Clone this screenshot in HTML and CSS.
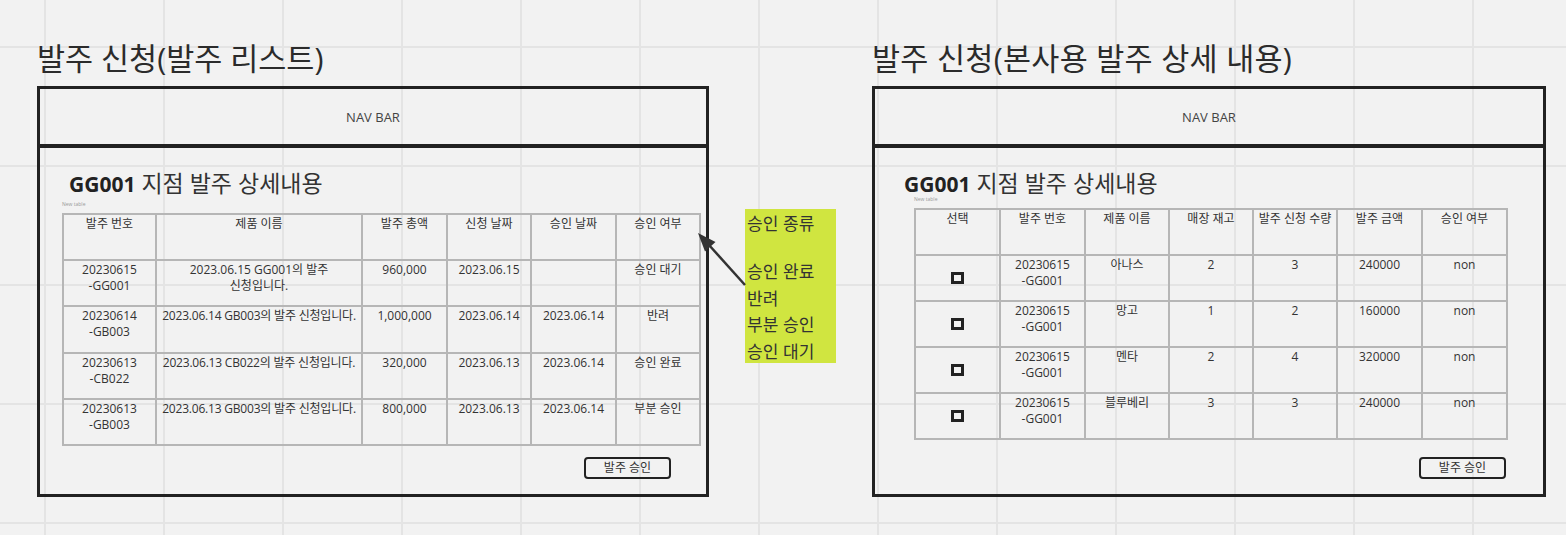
FILE: index.html
```html
<!DOCTYPE html>
<html lang="ko">
<head>
  <meta charset="UTF-8" />
  <meta name="viewport" content="width=device-width, initial-scale=1" />
  <title>발주 신청</title>
  <link rel="stylesheet" href="styles.css">
</head>
<body>

  <div class="canvas">

    <!-- 발주 리스트 -->
    <div class="board">
      <h1 class="board-title">발주 신청(발주 리스트)</h1>
      <div class="frame">
        <div class="nav">NAV BAR</div>
        <h2 class="heading"><b>GG001</b> 지점 발주 상세내용</h2>
        <div class="sheet sheet-list">
          <div class="caption">New table</div>
          <table class="grid list">
            <colgroup>
              <col style="width:93px"><col style="width:206px"><col style="width:85px">
              <col style="width:84px"><col style="width:85px"><col style="width:84px">
            </colgroup>
            <tr><td>발주 번호</td><td>제품 이름</td><td>발주 총액</td><td>신청 날짜</td><td>승인 날짜</td><td>승인 여부</td></tr>
            <tr><td>20230615<br>-GG001</td><td>2023.06.15 GG001의 발주<br>신청입니다.</td><td>960,000</td><td>2023.06.15</td><td></td><td>승인 대기</td></tr>
            <tr><td>20230614<br>-GB003</td><td class="long">2023.06.14 GB003의 발주 신청입니다.</td><td>1,000,000</td><td>2023.06.14</td><td>2023.06.14</td><td>반려</td></tr>
            <tr><td>20230613<br>-CB022</td><td class="long">2023.06.13 CB022의 발주 신청입니다.</td><td>320,000</td><td>2023.06.13</td><td>2023.06.14</td><td>승인 완료</td></tr>
            <tr><td>20230613<br>-GB003</td><td class="long">2023.06.13 GB003의 발주 신청입니다.</td><td>800,000</td><td>2023.06.13</td><td>2023.06.14</td><td>부분 승인</td></tr>
          </table>
          <div class="actions">
            <button class="approve-btn">발주 승인</button>
          </div>
        </div>
      </div>
    </div>

    <!-- 승인 종류 메모 -->
    <div class="side">
      <svg class="arrow" width="53" height="61" viewBox="0 0 53 61">
        <line x1="50" y1="56" x2="14" y2="16" stroke="#333" stroke-width="2.5" />
        <polygon points="3,4 20.5,13 10,22.5" fill="#333" />
      </svg>
      <div class="note">
        <div class="note-title">승인 종류</div>
        <div class="note-list">
          승인 완료<br>
          반려<br>
          부분 승인<br>
          승인 대기
        </div>
      </div>
    </div>

    <!-- 본사용 발주 상세 -->
    <div class="board board-wide">
      <h1 class="board-title">발주 신청(본사용 발주 상세 내용)</h1>
      <div class="frame">
        <div class="nav">NAV BAR</div>
        <h2 class="heading"><b>GG001</b> 지점 발주 상세내용</h2>
        <div class="sheet sheet-detail">
          <div class="caption">New table</div>
          <table class="grid detail">
            <colgroup>
              <col style="width:85px"><col style="width:85px"><col style="width:84px"><col style="width:84px">
              <col style="width:84px"><col style="width:85px"><col style="width:85px">
            </colgroup>
            <tr><td>선택</td><td>발주 번호</td><td>제품 이름</td><td>매장 재고</td><td>발주 신청 수량</td><td>발주 금액</td><td>승인 여부</td></tr>
            <tr><td><span class="check"></span></td><td>20230615<br>-GG001</td><td>아나스</td><td>2</td><td>3</td><td>240000</td><td>non</td></tr>
            <tr><td><span class="check"></span></td><td>20230615<br>-GG001</td><td>망고</td><td>1</td><td>2</td><td>160000</td><td>non</td></tr>
            <tr><td><span class="check"></span></td><td>20230615<br>-GG001</td><td>멘타</td><td>2</td><td>4</td><td>320000</td><td>non</td></tr>
            <tr><td><span class="check"></span></td><td>20230615<br>-GG001</td><td>블루베리</td><td>3</td><td>3</td><td>240000</td><td>non</td></tr>
          </table>
          <div class="actions">
            <button class="approve-btn">발주 승인</button>
          </div>
        </div>
      </div>
    </div>

  </div>

</body>
</html>
```

FILE: styles.css
```css
html, body {
  margin: 0;
  height: 100%;
}
body {
  background-color: #f2f2f2;
  background-image:
    linear-gradient(to right, #e4e4e4 2px, transparent 2px),
    linear-gradient(to bottom, #e4e4e4 2px, transparent 2px);
  background-size: 119px 119px;
  background-position: 44px 46px;
  color: #333;
  font-family: "Open Sans", "Noto Sans CJK KR", sans-serif;
  overflow: hidden;
}
.canvas {
  display: flex;
  align-items: flex-start;
  padding: 41px 0 0 37px;
}
.board {
  width: 672px;
  flex: none;
}
.board-wide {
  width: 674px;
}
.board-title {
  margin: 0 0 11px 0;
  font-size: 30.5px;
  line-height: 34px;
  font-weight: 400;
  color: #2b2b2b;
  white-space: nowrap;
}
.board-wide .board-title {
  letter-spacing: 0.3px;
}
.frame {
  height: 411px;
  border: 3px solid #222;
  box-sizing: border-box;
}
.nav {
  height: 55px;
  border-bottom: 4px solid #222;
  display: flex;
  align-items: center;
  justify-content: center;
  font-size: 13px;
  color: #444;
}
.heading {
  margin: 21px 0 0 29px;
  font-size: 23px;
  line-height: 28px;
  font-weight: 400;
  color: #333;
}
.heading b {
  font-size: 21px;
  font-weight: 700;
  color: #222;
}
.sheet-list {
  margin-left: 22px;
  width: 637px;
}
.sheet-detail {
  margin-left: 39px;
  width: 592px;
}
.caption {
  font-size: 5px;
  line-height: 7px;
  color: #999;
  padding: 3px 0 5px;
}
.sheet-detail .caption {
  padding-top: 0;
  margin-top: -2px;
}
.grid {
  border-collapse: collapse;
  table-layout: fixed;
  width: 100%;
}
.grid td {
  border: 2px solid #b6b6b6;
  height: 43.2px;
  padding: 1px 1px 0;
  vertical-align: top;
  text-align: center;
  font-size: 12px;
  line-height: 16px;
  color: #333;
  white-space: nowrap;
  overflow: visible;
}
.detail td {
  height: 43px;
}
.grid td.long {
  letter-spacing: -0.2px;
}
.check {
  display: block;
  width: 13px;
  height: 12px;
  margin: 15px auto 0;
  border: 3px solid #222;
  box-sizing: border-box;
}
.actions {
  display: flex;
  justify-content: flex-end;
  margin-top: 11px;
}
.sheet-list .actions {
  padding-right: 28px;
}
.sheet-detail .actions {
  margin-top: 17px;
}
.approve-btn {
  width: 87px;
  height: 22px;
  padding: 0;
  border: 2px solid #222;
  border-radius: 4px;
  background: transparent;
  font-family: "Open Sans", "Noto Sans CJK KR", sans-serif;
  font-size: 12px;
  line-height: 16px;
  color: #333;
}
/* 메모 + 화살표 */
.side {
  position: relative;
  width: 91px;
  flex: none;
  padding: 168px 36px 0;
}
.arrow {
  position: absolute;
  left: -14px;
  top: 188px;
}
.note {
  height: 154px;
  background: #d0e540;
  padding: 0 2px;
  font-size: 17px;
  color: #333;
  font-family: "Noto Sans CJK KR", sans-serif;
}
.note-title {
  line-height: 27px;
}
.note-list {
  margin-top: 22px;
  line-height: 26.5px;
}
```
